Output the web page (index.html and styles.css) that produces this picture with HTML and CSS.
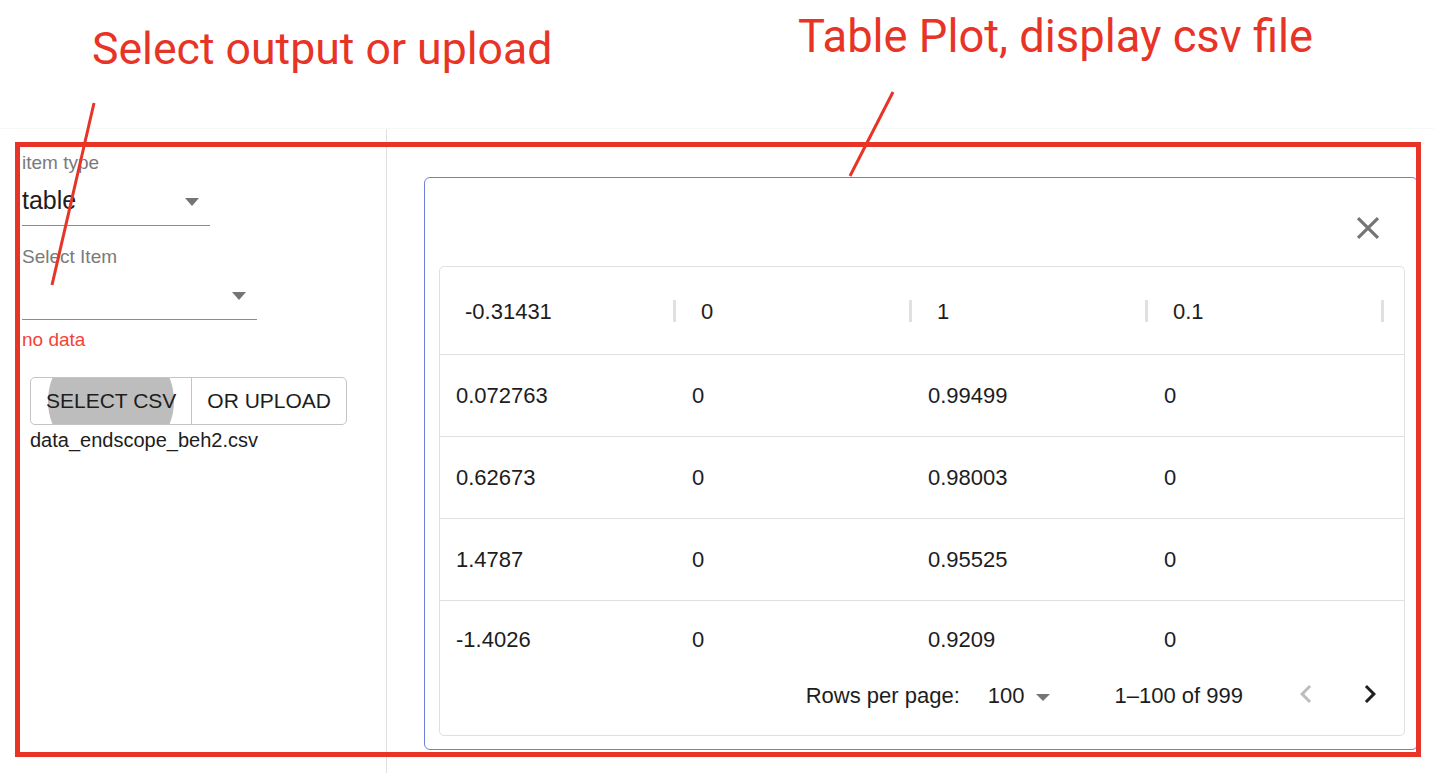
FILE: index.html
```html
<!DOCTYPE html>
<html lang="en">
<head>
<meta charset="utf-8">
<title>Table Plot</title>
<link rel="stylesheet" href="styles.css">
</head>
<body>
<div class="page">
  <header class="notes">
    <div class="note note-left">Select output or upload</div>
    <div class="note note-right">Table Plot, display csv file</div>
  </header>
  <main class="main">
    <aside class="sidebar">
      <div class="field field-type">
        <div class="field-label">item type</div>
        <div class="field-input">
          <span class="field-value">table</span>
          <span class="caret"></span>
        </div>
      </div>
      <div class="field field-item">
        <div class="field-label">Select Item</div>
        <div class="field-input">
          <span class="field-value"></span>
          <span class="caret"></span>
        </div>
      </div>
      <div class="helper">no data</div>
      <div class="btn-group">
        <div class="btn btn-active"><span class="btn-text">SELECT CSV</span></div>
        <div class="btn"><span class="btn-text">OR UPLOAD</span></div>
      </div>
      <div class="filename">data_endscope_beh2.csv</div>
    </aside>
    <section class="content">
      <div class="card">
        <div class="card-top">
          <div class="icon-btn">
            <svg width="38" height="38" viewBox="0 0 24 24"><path fill="#757575" d="M19 6.41L17.59 5 12 10.59 6.41 5 5 6.41 10.59 12 5 17.59 6.41 19 12 13.41 17.59 19 19 17.59 13.41 12z"/></svg>
          </div>
        </div>
        <div class="grid">
          <div class="grid-head">
            <div class="hcell">-0.31431</div>
            <div class="hcell">0</div>
            <div class="hcell">1</div>
            <div class="hcell">0.1</div>
          </div>
          <div class="grid-row">
            <div class="cell">0.072763</div><div class="cell">0</div><div class="cell">0.99499</div><div class="cell">0</div>
          </div>
          <div class="grid-row">
            <div class="cell">0.62673</div><div class="cell">0</div><div class="cell">0.98003</div><div class="cell">0</div>
          </div>
          <div class="grid-row">
            <div class="cell">1.4787</div><div class="cell">0</div><div class="cell">0.95525</div><div class="cell">0</div>
          </div>
          <div class="grid-row grid-row-last">
            <div class="cell">-1.4026</div><div class="cell">0</div><div class="cell">0.9209</div><div class="cell">0</div>
          </div>
          <div class="grid-foot">
            <span class="foot-label">Rows per page:</span>
            <span class="foot-select">100<span class="caret caret-small"></span></span>
            <span class="foot-range">1–100 of 999</span>
            <span class="page-btn page-prev">
              <svg width="36" height="36" viewBox="0 0 24 24"><path fill="#bdbdbd" d="M15.41 7.41L14 6l-6 6 6 6 1.41-1.41L10.83 12z"/></svg>
            </span>
            <span class="page-btn page-next">
              <svg width="36" height="36" viewBox="0 0 24 24"><path fill="#1f1f1f" d="M10 6L8.59 7.41 13.17 12l-4.58 4.59L10 18l6-6z"/></svg>
            </span>
          </div>
        </div>
      </div>
    </section>
  </main>
  <svg class="overlay" width="1434" height="776" viewBox="0 0 1434 776">
    <rect x="17.5" y="144.5" width="1401" height="610" fill="none" stroke="#e73426" stroke-width="5"/>
    <line x1="94" y1="103" x2="52" y2="285" stroke="#e73426" stroke-width="3"/>
    <line x1="893" y1="92" x2="850" y2="176" stroke="#e73426" stroke-width="3"/>
  </svg>
</div>
</body>
</html>
```

FILE: styles.css
```css
html, body {
  margin: 0;
  padding: 0;
  background: #ffffff;
}

body {
  font-family: "Liberation Sans", Arial, sans-serif;
  color: rgba(0, 0, 0, 0.87);
}

.page {
  position: relative;
  width: 1434px;
  height: 776px;
  overflow: hidden;
}

/* annotation titles */
.notes {
  height: 128px;
  display: flex;
  align-items: flex-start;
}

.note {
  font-family: Roboto, "Liberation Sans", sans-serif;
  color: #e73426;
  line-height: 1;
  white-space: nowrap;
}

.note-left {
  font-size: 44.6px;
  margin-left: 92px;
  margin-top: 27px;
  width: 706px;
}

.note-right {
  font-size: 45.3px;
  margin-top: 14px;
}

/* main app */
.main {
  display: flex;
  height: 644px;
  border-top: 1px solid #f7f7f7;
}

.sidebar {
  width: 387px;
  flex: none;
  border-right: 1px solid #e0e0e0;
  padding: 22px 0 0 22px;
  box-sizing: border-box;
}

.field-type {
  width: 188px;
}

.field-item {
  width: 235px;
  margin-top: 19px;
}

.field-label {
  font-size: 19px;
  line-height: 23px;
  color: #7a7a7a;
}

.field-input {
  height: 51px;
  display: flex;
  align-items: center;
  justify-content: space-between;
  padding-right: 11px;
  border-bottom: 1px solid #8c8c8c;
}

.field-value {
  font-size: 25px;
  line-height: 30px;
  color: #1d1d1d;
}

.caret {
  width: 0;
  height: 0;
  border-left: 7px solid transparent;
  border-right: 7px solid transparent;
  border-top: 8px solid #757575;
  margin-top: 5px;
}

.helper {
  margin-top: 8px;
  font-size: 19px;
  line-height: 23px;
  color: #f44336;
}

.btn-group {
  margin: 26px 0 0 8px;
  display: inline-flex;
  height: 48px;
  border: 1px solid #c4c4c4;
  border-radius: 5px;
  box-sizing: border-box;
  overflow: hidden;
}

.btn {
  position: relative;
  display: flex;
  align-items: center;
  padding: 0 15px;
  font-size: 21px;
  color: #1d1d1d;
  overflow: hidden;
}

.btn + .btn {
  border-left: 1px solid #c4c4c4;
}

.btn-active::before {
  content: "";
  position: absolute;
  left: 50%;
  top: 50%;
  width: 126px;
  height: 126px;
  margin: -63px 0 0 -63px;
  border-radius: 50%;
  background: #bdbdbd;
}

.btn-text {
  position: relative;
}

.filename {
  margin: 3px 0 0 8px;
  font-size: 20px;
  line-height: 24px;
  color: #1d1d1d;
}

/* content */
.content {
  flex: 1;
  padding: 48px 0 0 37px;
  box-sizing: border-box;
}

.card {
  width: 994px;
  height: 573px;
  border: 1px solid #6f7fd6;
  border-radius: 6px;
  box-sizing: border-box;
  display: flex;
  flex-direction: column;
}

.card-top {
  height: 88px;
  display: flex;
  justify-content: flex-end;
  align-items: flex-start;
  padding: 26px 25px 0 0;
  box-sizing: border-box;
}

.icon-btn {
  width: 48px;
  height: 48px;
  display: flex;
  align-items: center;
  justify-content: center;
}

.grid {
  margin: 0 12px 0 14px;
  height: 470px;
  border: 1px solid #e0e0e0;
  border-radius: 5px;
  box-sizing: border-box;
  display: flex;
  flex-direction: column;
  font-size: 22px;
  color: #1d1d1d;
}

.grid-head {
  height: 88px;
  display: flex;
  align-items: center;
  border-bottom: 1px solid #e0e0e0;
  box-sizing: border-box;
}

.hcell {
  position: relative;
  width: 236px;
  height: 100%;
  display: flex;
  align-items: center;
  padding: 2px 0 0 25px;
  box-sizing: border-box;
}

.hcell::after {
  content: "";
  position: absolute;
  right: 0;
  top: 33px;
  width: 3px;
  height: 22px;
  background: #e0e0e0;
}

.grid-row {
  height: 82px;
  display: flex;
  border-bottom: 1px solid #e0e0e0;
  box-sizing: border-box;
}

.grid-row-last {
  height: 78px;
  border-bottom: none;
}

.cell {
  width: 236px;
  display: flex;
  align-items: center;
  padding-left: 16px;
  box-sizing: border-box;
}

.grid-foot {
  height: 56px;
  padding: 0 10px 22px 0;
  box-sizing: border-box;
  display: flex;
  align-items: center;
  justify-content: flex-end;
}

.foot-label {
  margin-right: 28px;
}

.foot-select {
  display: flex;
  align-items: center;
}

.caret-small {
  margin: 2px 0 0 11px;
  border-left-width: 7px;
  border-right-width: 7px;
  border-top-width: 7px;
}

.foot-range {
  margin-left: 65px;
  margin-right: 39px;
}

.page-btn {
  width: 48px;
  height: 48px;
  display: flex;
  align-items: center;
  justify-content: center;
  margin-top: -4px;
}

.page-next {
  margin-left: 16px;
}

.overlay {
  position: absolute;
  left: 0;
  top: 0;
  pointer-events: none;
}
```
